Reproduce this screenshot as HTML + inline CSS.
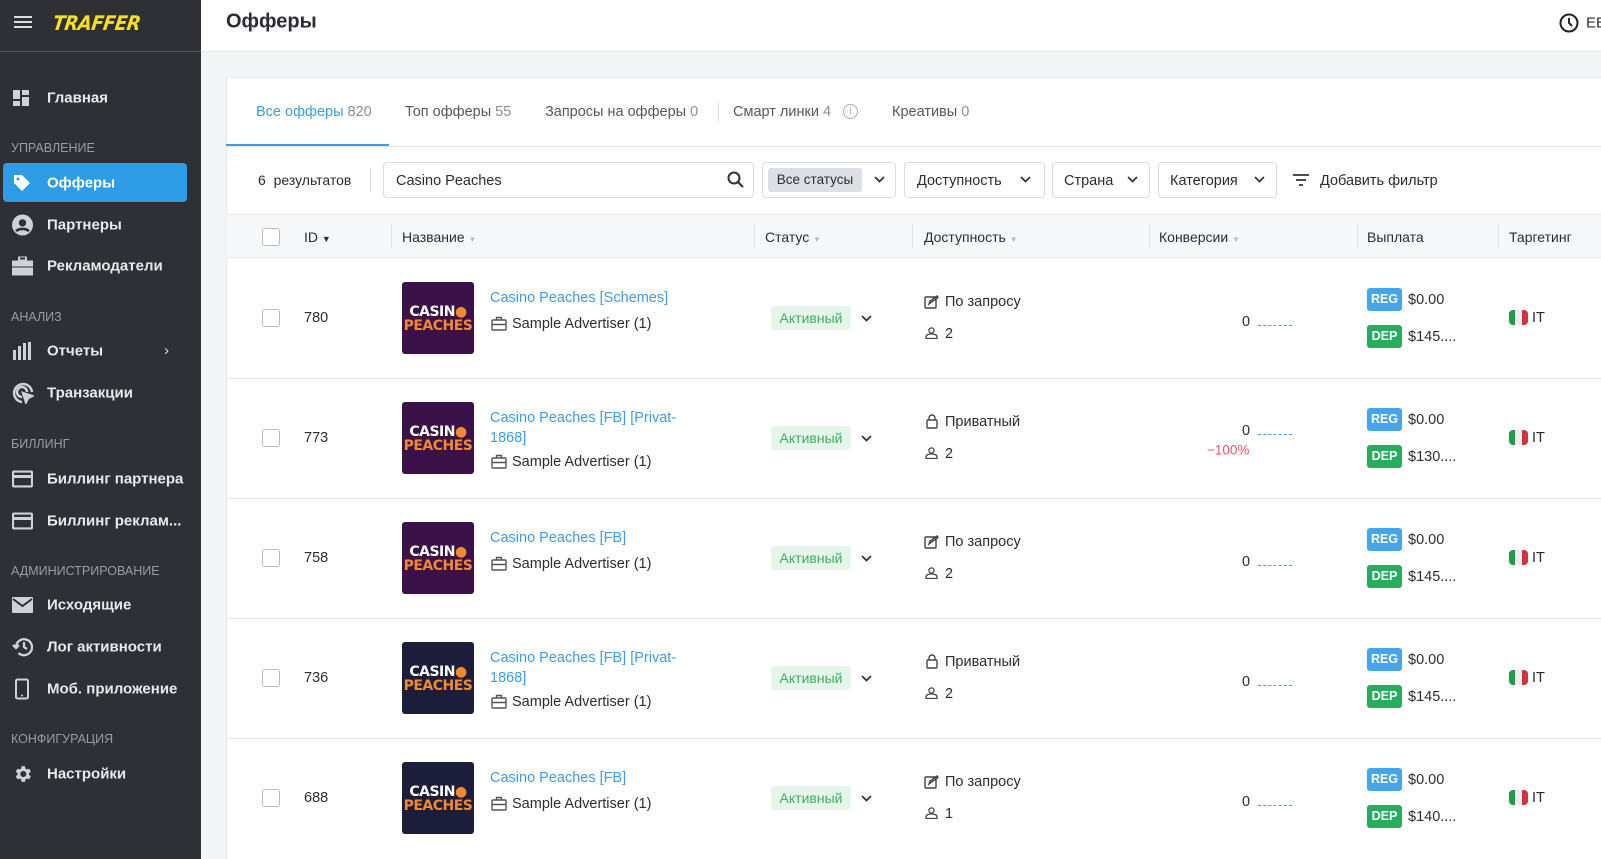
<!DOCTYPE html>
<html><head><meta charset="utf-8">
<style>
*{box-sizing:border-box;margin:0;padding:0}
body{width:1601px;height:859px;overflow:hidden;font-family:"Liberation Sans",Arial,sans-serif;background:#f3f4f6;position:relative;color:#2b2d33}
.sb{position:absolute;left:0;top:0;width:201px;height:859px;background:#2f3036}
.sb .top{height:52px;border-bottom:1px solid #55575e;position:relative}
.ab{position:absolute}
.nav{position:absolute;left:47px;color:#e8e9ec;font-size:15px;font-weight:bold;transform:translateY(-50%)}
.sec{position:absolute;left:11px;color:#9a9ca3;font-size:12.5px;transform:translateY(-50%)}
.ic{position:absolute;left:12px;transform:translateY(-50%)}
.hdr{position:absolute;left:201px;top:0;right:0;height:52px;background:#fff;border-bottom:1px solid #e3e5e9}
.card{position:absolute;left:226px;top:77px;right:0;bottom:0;background:#fff;border-left:1px solid #e6e8ec;border-top:1px solid #e6e8ec}
.t{position:absolute;white-space:nowrap;transform:translateY(-50%)}
.g{color:#8a8d94}
.box{position:absolute;border:1px solid #d8dbe0;border-radius:4px;background:#fff}
.hl{position:absolute;left:226px;right:0;height:1px;background:#e6e8ec}
.vs{position:absolute;width:1px;background:#e2e4e8;top:224px;height:24px}
.cb{position:absolute;left:262px;width:18px;height:18px;border:1.5px solid #b9bcc2;border-radius:3px;background:#fff}
.logo{position:absolute;left:402px;width:72px;height:72px;border-radius:3px;color:#fff;font-weight:900;font-family:"DejaVu Sans",sans-serif;text-align:center;font-size:14px;line-height:14px;padding-top:23px;letter-spacing:-.5px}
.logo b{display:block;color:#f08a30}
.link{color:#3d9be9;font-size:14.5px}
.badge{position:absolute;left:771px;width:80px;height:24px;background:#e6f5ea;color:#3fae62;border-radius:4px;font-size:14px;text-align:center;line-height:24px}
.pay{position:absolute;left:1367px;width:35px;height:23px;border-radius:3px;color:#fff;font-weight:bold;font-size:12.5px;text-align:center;line-height:23px}
.flag{position:absolute;left:1509px;width:19px;height:15px;border-radius:4px;overflow:hidden;display:flex}
.flag i{flex:1}
.dash{position:absolute;left:1258px;width:34px;border-top:1.5px dashed #3d9be9}
</style></head><body>
<div class="sb">
 <div class="top">
  <div class="ab" style="left:14px;top:16px;width:18px;height:2px;background:#ddd;box-shadow:0 5px 0 #ddd,0 10px 0 #ddd"></div>
  <div class="ab" style="left:53px;top:11px;color:#f5e01f;font-size:20px;font-weight:900;font-style:italic;letter-spacing:-0.5px;font-family:'DejaVu Sans Condensed','DejaVu Sans',sans-serif;transform:skewX(-8deg)">TRAFFER</div>
 </div>
 <svg class="ic" style="top:98px" width="18" height="18" viewBox="0 0 18 18" fill="#cfd1d6"><rect x="1" y="1" width="7" height="9"/><rect x="10" y="1" width="7" height="5"/><rect x="1" y="12" width="7" height="5"/><rect x="10" y="8" width="7" height="9"/></svg>
 <div class="nav" style="top:98px">Главная</div>
 <div class="sec" style="top:148px">УПРАВЛЕНИЕ</div>
 <div class="ab" style="left:3px;top:163px;width:184px;height:39px;background:#2d9be6;border-radius:4px"></div>
 <svg class="ic" style="top:183px" width="20" height="20" viewBox="0 0 20 20"><path d="M2 2h8l8 8-8 8-8-8z" fill="#fff"/><circle cx="6" cy="6" r="1.5" fill="#2d9be6"/></svg>
 <div class="nav" style="top:183px;color:#fff">Офферы</div>
 <svg class="ic" style="top:225px" width="21" height="21" viewBox="0 0 20 20"><circle cx="10" cy="10" r="10" fill="#cfd1d6"/><circle cx="10" cy="8" r="3.5" fill="#2f3036"/><path d="M4 16c2-3 10-3 12 0" stroke="#2f3036" stroke-width="2.5" fill="none"/></svg>
 <div class="nav" style="top:225px">Партнеры</div>
 <svg class="ic" style="top:266px" width="21" height="19" viewBox="0 0 21 19" fill="#cfd1d6"><rect x="7" y="0" width="7" height="4" rx="1" fill="none" stroke="#cfd1d6" stroke-width="2"/><rect x="0" y="4" width="21" height="6"/><rect x="0" y="11" width="21" height="8"/></svg>
 <div class="nav" style="top:266px">Рекламодатели</div>
 <div class="sec" style="top:317px">АНАЛИЗ</div>
 <svg class="ic" style="top:351px" width="20" height="18" viewBox="0 0 20 18" fill="#cfd1d6"><rect x="1" y="8" width="3" height="10"/><rect x="6" y="4" width="3" height="14"/><rect x="11" y="1" width="3" height="17"/><rect x="16" y="0" width="3" height="18"/></svg>
 <div class="nav" style="top:351px">Отчеты</div>
 <div class="ab" style="left:164px;top:342px;color:#ddd;font-size:15px">›</div>
 <svg class="ic" style="top:393px" width="22" height="22" viewBox="0 0 22 22" fill="none" stroke="#cfd1d6" stroke-width="2.5"><path d="M10 20A9 9 0 1 1 20 10"/><path d="M10 15a5 5 0 1 1 5-5"/><path d="M11 11l9 3-4 2-2 4z" fill="#cfd1d6"/></svg>
 <div class="nav" style="top:393px">Транзакции</div>
 <div class="sec" style="top:444px">БИЛЛИНГ</div>
 <svg class="ic" style="top:479px" width="21" height="17" viewBox="0 0 21 17" fill="none" stroke="#cfd1d6" stroke-width="2.2"><rect x="1" y="1" width="19" height="15" rx="1"/><path d="M1 6h19" stroke-width="3"/></svg>
 <div class="nav" style="top:479px">Биллинг партнера</div>
 <svg class="ic" style="top:521px" width="21" height="17" viewBox="0 0 21 17" fill="none" stroke="#cfd1d6" stroke-width="2.2"><rect x="1" y="1" width="19" height="15" rx="1"/><path d="M1 6h19" stroke-width="3"/></svg>
 <div class="nav" style="top:521px">Биллинг реклам...</div>
 <div class="sec" style="top:571px">АДМИНИСТРИРОВАНИЕ</div>
 <svg class="ic" style="top:605px" width="21" height="16" viewBox="0 0 21 16"><rect width="21" height="16" rx="1" fill="#cfd1d6"/><path d="M1 2l9.5 7L20 2" stroke="#2f3036" stroke-width="2" fill="none"/></svg>
 <div class="nav" style="top:605px">Исходящие</div>
 <svg class="ic" style="top:647px" width="21" height="20" viewBox="0 0 21 20" fill="none" stroke="#cfd1d6" stroke-width="2.3"><path d="M4 10a8 8 0 1 1 2.5 6"/><path d="M1 8l3 3 3-3"/><path d="M12 5v5l3 2"/></svg>
 <div class="nav" style="top:647px">Лог активности</div>
 <svg class="ic" style="top:689px;left:15px" width="14" height="21" viewBox="0 0 14 21"><rect x="1" y="1" width="12" height="19" rx="1.5" fill="none" stroke="#cfd1d6" stroke-width="2"/><circle cx="7" cy="17" r="1" fill="#cfd1d6"/></svg>
 <div class="nav" style="top:689px">Моб. приложение</div>
 <div class="sec" style="top:739px">КОНФИГУРАЦИЯ</div>
 <svg class="ic" style="top:774px" width="21" height="21" viewBox="0 0 24 24"><path fill="#cfd1d6" d="M19.4 13a7.5 7.5 0 0 0 0-2l2.1-1.6-2-3.5-2.5 1a7 7 0 0 0-1.7-1L14.9 3h-4l-.4 2.9a7 7 0 0 0-1.7 1l-2.5-1-2 3.5L6.4 11a7.5 7.5 0 0 0 0 2l-2.1 1.6 2 3.5 2.5-1a7 7 0 0 0 1.7 1l.4 2.9h4l.4-2.9a7 7 0 0 0 1.7-1l2.5 1 2-3.5zM12.9 15.5a3.5 3.5 0 1 1 0-7 3.5 3.5 0 0 1 0 7z"/></svg>
 <div class="nav" style="top:774px">Настройки</div>
</div>

<div class="hdr">
 <div class="t" style="left:25px;top:22px;font-size:20px;font-weight:bold;color:#2b2d33">Офферы</div>
 <svg class="ab" style="left:1358px;top:13px" width="20" height="20" viewBox="0 0 20 20" fill="none" stroke="#222" stroke-width="2"><circle cx="10" cy="10" r="8.5"/><path d="M10 5v5l3 3"/></svg>
 <div class="t" style="left:1385px;top:23px;font-size:15px">EE</div>
</div>

<div class="card"></div>
<div class="t" style="left:256px;top:112px;font-size:14.5px;color:#3d9be9">Все офферы <span class="g">820</span></div>
<div class="ab" style="left:226px;top:144px;width:163px;height:2px;background:#3d9be9"></div>
<div class="t" style="left:405px;top:112px;font-size:14.5px;color:#55585f">Топ офферы <span class="g">55</span></div>
<div class="t" style="left:545px;top:112px;font-size:14.5px;color:#55585f">Запросы на офферы <span class="g">0</span></div>
<div class="ab" style="left:718px;top:102px;width:1px;height:20px;background:#e0e2e6"></div>
<div class="t" style="left:733px;top:112px;font-size:14.5px;color:#55585f">Смарт линки <span class="g">4</span></div>
<div class="ab" style="left:843px;top:104px;width:15px;height:15px;border:1px solid #aaa;border-radius:50%;font-size:10px;text-align:center;line-height:13px;color:#aaa">i</div>
<div class="t" style="left:892px;top:112px;font-size:14.5px;color:#55585f">Креативы <span class="g">0</span></div>
<div class="hl" style="top:146px"></div>
<div class="t" style="left:258px;top:180px;font-size:14px">6&nbsp; результатов</div>
<div class="ab" style="left:370px;top:168px;width:1px;height:24px;background:#e0e2e6"></div>
<div class="box" style="left:383px;top:162px;width:371px;height:36px"></div>
<div class="t" style="left:396px;top:181px;font-size:14.5px">Casino Peaches</div>
<svg class="ab" style="left:727px;top:171px" width="17" height="17" viewBox="0 0 17 17" fill="none" stroke="#333" stroke-width="2"><circle cx="7" cy="7" r="5.5"/><path d="M11 11l5 5"/></svg>
<div class="box" style="left:762px;top:162px;width:134px;height:36px"></div>
<div class="ab" style="left:768px;top:168px;width:94px;height:24px;background:#dcdfe4;border-radius:3px;font-size:13.5px;line-height:24px;text-align:center">Все статусы</div>
<div class="box" style="left:904px;top:162px;width:141px;height:36px"></div>
<div class="t" style="left:917px;top:181px;font-size:14.5px">Доступность</div>
<div class="box" style="left:1052px;top:162px;width:98px;height:36px"></div>
<div class="t" style="left:1064px;top:181px;font-size:14.5px">Страна</div>
<div class="box" style="left:1158px;top:162px;width:119px;height:36px"></div>
<div class="t" style="left:1170px;top:181px;font-size:14.5px">Категория</div>
<svg class="ab" style="left:874px;top:176px" width="11" height="7"><path d="M1 1l4.5 4.5L10 1" stroke="#333" stroke-width="1.7" fill="none"/></svg>
<svg class="ab" style="left:1020px;top:176px" width="11" height="7"><path d="M1 1l4.5 4.5L10 1" stroke="#333" stroke-width="1.7" fill="none"/></svg>
<svg class="ab" style="left:1127px;top:176px" width="11" height="7"><path d="M1 1l4.5 4.5L10 1" stroke="#333" stroke-width="1.7" fill="none"/></svg>
<svg class="ab" style="left:1254px;top:176px" width="11" height="7"><path d="M1 1l4.5 4.5L10 1" stroke="#333" stroke-width="1.7" fill="none"/></svg>
<svg class="ab" style="left:1293px;top:174px" width="16" height="12" stroke="#333" stroke-width="1.8"><path d="M0 1h16M3 6h10M6 11h4"/></svg>
<div class="t" style="left:1320px;top:181px;font-size:14.5px">Добавить фильтр</div>
<div class="ab" style="left:226px;top:214px;right:0;height:44px;background:#f6f7f9;border-top:1px solid #e6e8ec;border-bottom:1px solid #e6e8ec"></div>
<div class="cb" style="top:228px"></div>
<div class="t" style="left:304px;top:237px;font-size:14px">ID <span style="font-size:9px">▼</span></div>
<div class="vs" style="left:391px"></div><div class="vs" style="left:754px"></div><div class="vs" style="left:912px"></div><div class="vs" style="left:1149px"></div><div class="vs" style="left:1357px"></div><div class="vs" style="left:1498px"></div>
<div class="t" style="left:402px;top:237px;font-size:14px">Название <span style="font-size:8px;color:#bbb">▼</span></div>
<div class="t" style="left:765px;top:237px;font-size:14px">Статус <span style="font-size:8px;color:#bbb">▼</span></div>
<div class="t" style="left:924px;top:237px;font-size:14px">Доступность <span style="font-size:8px;color:#bbb">▼</span></div>
<div class="t" style="left:1159px;top:237px;font-size:14px">Конверсии <span style="font-size:8px;color:#bbb">▼</span></div>
<div class="t" style="left:1367px;top:237px;font-size:14px">Выплата</div>
<div class="t" style="left:1509px;top:237px;font-size:14px">Таргетинг</div>

<div id="rows"></div>
<script>
var rows=[
 [780,"Casino Peaches [Schemes]",null,"req","2","145....",0,"#3a1248",false],
 [773,"Casino Peaches [FB] [Privat-","1868]","priv","2","130....",1,"#3a1248",true],
 [758,"Casino Peaches [FB]",null,"req","2","145....",0,"#3a1248",false],
 [736,"Casino Peaches [FB] [Privat-","1868]","priv","2","145....",1,"#1c1d3a",false],
 [688,"Casino Peaches [FB]",null,"req","1","140....",0,"#1c1d3a",false]];
var h="";
rows.forEach(function(r,i){
 var c=318+i*120;
 if(i>0)h+='<div class="hl" style="top:'+(c-60)+'px"></div>';
 h+='<div class="cb" style="top:'+(c-9)+'px"></div>';
 h+='<div class="t" style="left:304px;top:'+c+'px;font-size:14.5px">'+r[0]+'</div>';
 h+='<div class="logo" style="top:'+(c-36)+'px;background:'+r[7]+'">CASIN<span style="color:#f08a30">●</span><b>PEACHES</b></div>';
 if(r[2]){
  h+='<div class="t link" style="left:490px;top:'+(c-20)+'px">'+r[1]+'</div>';
  h+='<div class="t link" style="left:490px;top:'+c+'px">'+r[2]+'</div>';
 } else h+='<div class="t link" style="left:490px;top:'+(c-20)+'px">'+r[1]+'</div>';
 var ay=r[2]?c+24:c+6;
 h+='<svg class="ab" style="left:491px;top:'+(ay-8)+'px" width="16" height="15" viewBox="0 0 16 15" fill="none" stroke="#555" stroke-width="1.4"><rect x="1" y="4" width="14" height="10" rx="1"/><path d="M5.5 4V1.5h5V4M1 8.5h14"/></svg>';
 h+='<div class="t" style="left:512px;top:'+ay+'px;font-size:14.5px">Sample Advertiser (1)</div>';
 h+='<div class="badge" style="top:'+(c-12)+'px">Активный</div>';
 h+='<svg class="ab" style="left:861px;top:'+(c-3)+'px" width="11" height="7"><path d="M1 1l4.5 4.5L10 1" stroke="#333" stroke-width="1.7" fill="none"/></svg>';
 if(r[3]=="req"){
  h+='<svg class="ab" style="left:924px;top:'+(c-23)+'px" width="15" height="14" viewBox="0 0 15 14" fill="none" stroke="#444" stroke-width="1.4"><rect x="1" y="2" width="11" height="11" rx="1"/><path d="M5 9l1-3 7-5 1 1.5-7 5z"/></svg>';
  h+='<div class="t" style="left:945px;top:'+(c-16)+'px;font-size:14.5px">По запросу</div>';
 } else {
  h+='<svg class="ab" style="left:926px;top:'+(c-24)+'px" width="12" height="15" viewBox="0 0 12 15" fill="none" stroke="#444" stroke-width="1.4"><rect x="1" y="6" width="10" height="8" rx="1"/><path d="M3 6V4a3 3 0 0 1 6 0v2"/></svg>';
  h+='<div class="t" style="left:945px;top:'+(c-16)+'px;font-size:14.5px">Приватный</div>';
 }
 h+='<svg class="ab" style="left:925px;top:'+(c+9)+'px" width="13" height="12" viewBox="0 0 13 12" fill="none" stroke="#444" stroke-width="1.3"><circle cx="6.5" cy="3.5" r="2.6"/><path d="M1 11.5v-1.5c0-2 2-3 5.5-3s5.5 1 5.5 3v1.5z"/></svg>';
 h+='<div class="t" style="left:945px;top:'+(c+16)+'px;font-size:14.5px">'+r[4]+'</div>';
 var zy=r[8]?c-7:c+4;
 h+='<div class="t" style="left:1242px;top:'+zy+'px;font-size:14.5px">0</div>';
 h+='<div class="dash" style="top:'+(zy+3)+'px"></div>';
 if(r[8])h+='<div class="t" style="left:1207px;top:'+(c+12)+'px;font-size:13.5px;color:#f0565a">−100%</div>';
 h+='<div class="pay" style="top:'+(c-30)+'px;background:#45a4ea">REG</div>';
 h+='<div class="t" style="left:1408px;top:'+(c-18)+'px;font-size:14.5px">$0.00</div>';
 h+='<div class="pay" style="top:'+(c+7)+'px;background:#27ad5f">DEP</div>';
 h+='<div class="t" style="left:1408px;top:'+(c+19)+'px;font-size:14.5px">$'+r[5]+'</div>';
 h+='<div class="flag" style="top:'+(c-8)+'px"><i style="background:#1f9e48"></i><i style="background:#eee"></i><i style="background:#d8303a"></i></div>';
 h+='<div class="t" style="left:1532px;top:'+c+'px;font-size:14.5px">IT</div>';
});
document.getElementById("rows").innerHTML=h;
</script>
</body></html>
